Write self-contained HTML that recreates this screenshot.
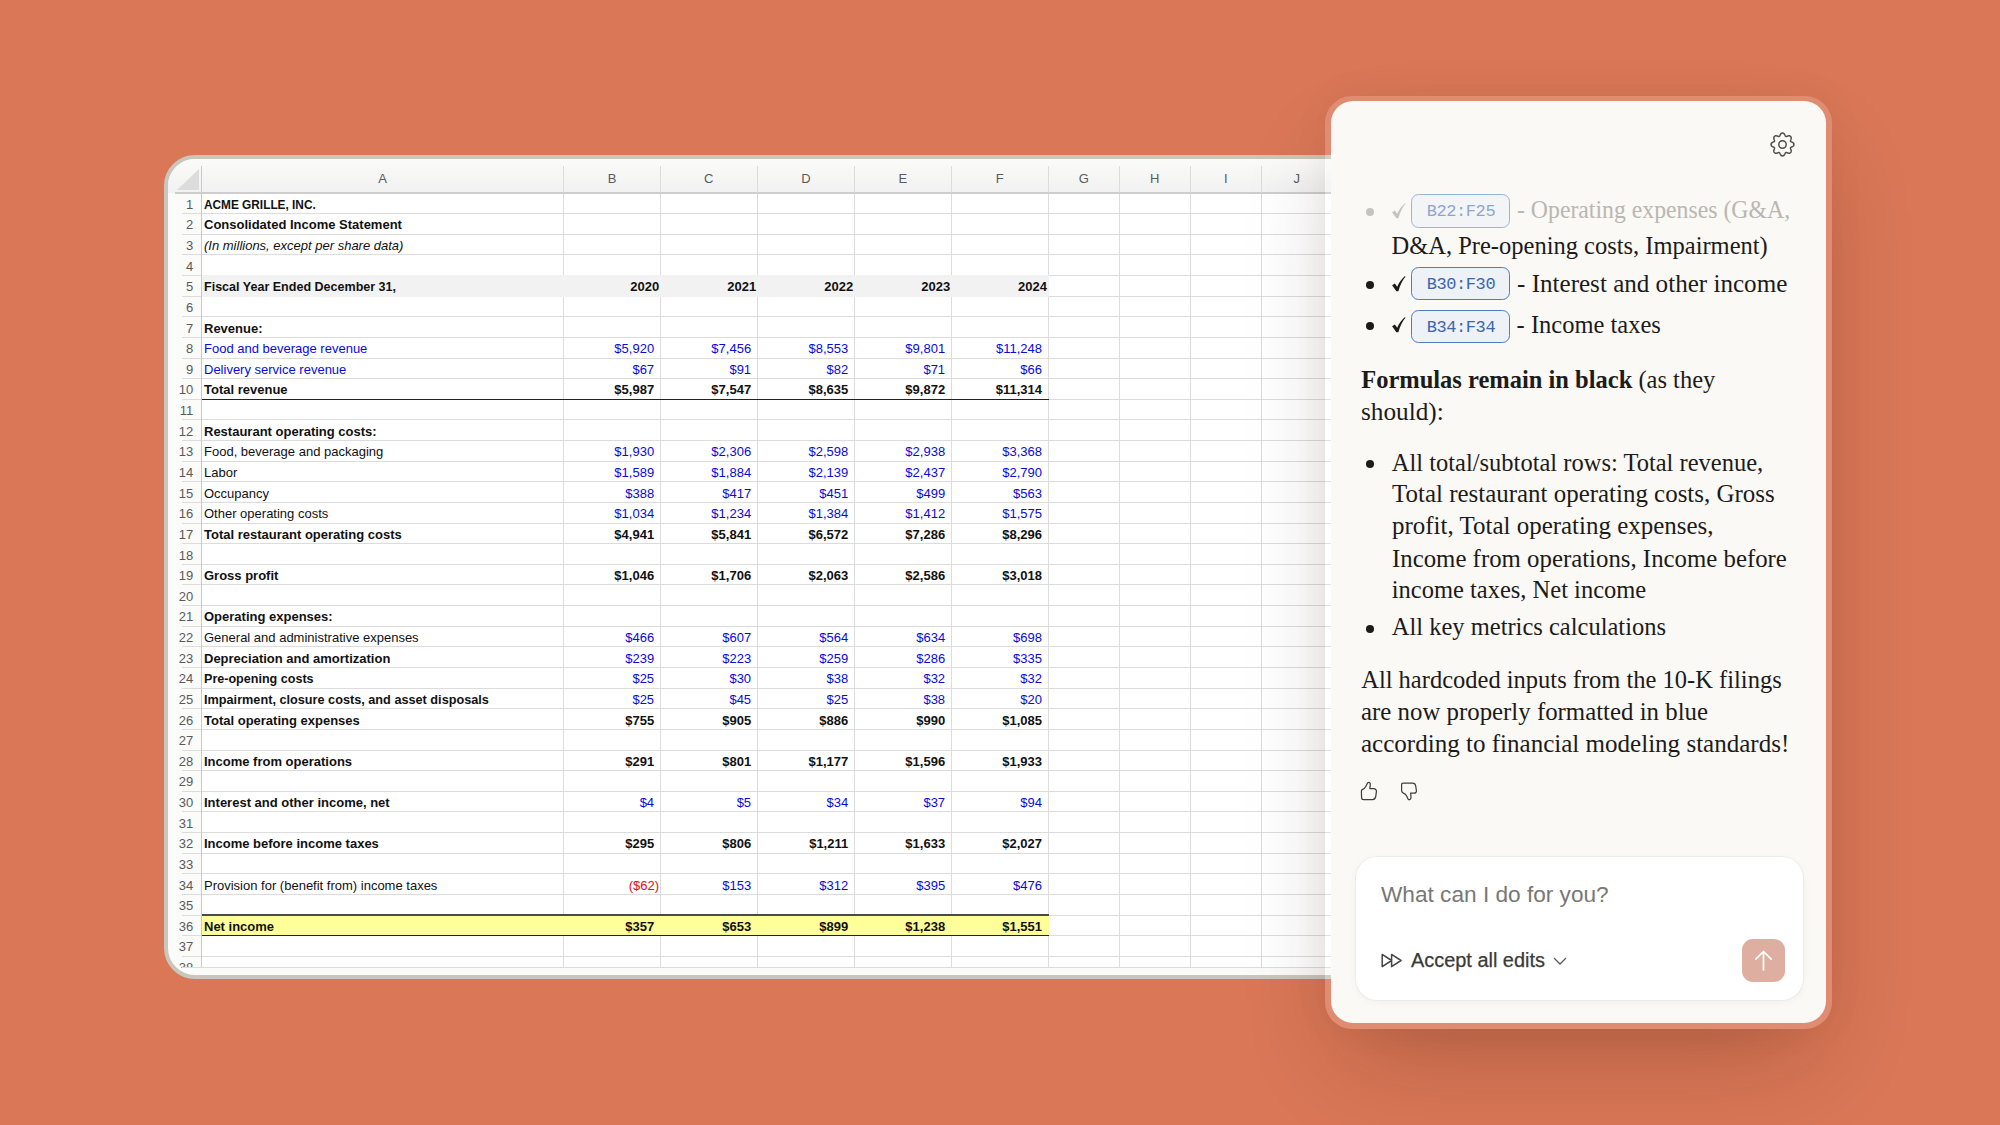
<!DOCTYPE html>
<html><head><meta charset="utf-8">
<style>
*{box-sizing:border-box;margin:0;padding:0}
html,body{width:2000px;height:1125px;overflow:hidden}
body{background:#d97757;position:relative;font-family:"Liberation Sans",sans-serif}
#sheet{position:absolute;left:164px;top:155px;width:1300px;height:824px;border:4px solid #c9c6be;border-radius:31px;background:#fbfbfa;overflow:hidden}
#grid{position:absolute;left:0;top:0;width:1292px;height:808.50px;overflow:hidden}
.colhdr{position:absolute;left:0;top:0;width:1300px;height:34px;background:linear-gradient(#fbfbfa,#f1f1f1)}
.gridbg{position:absolute;left:33.50px;top:34.00px;width:1200px;height:775.00px;background:#fff}
.hl{position:absolute;left:14px;width:1300px;height:1px;background:#dcdcdc}
.vl{position:absolute;top:7px;height:802px;width:1px;background:#dcdcdc}
.fill{position:absolute}
.dl{position:absolute;height:1.5px;background:#222}
.rn{position:absolute;left:0;width:25.19999999999999px;height:20.63px;line-height:20.63px;text-align:right;font-size:13px;color:#5a5a5a}
.cl{position:absolute;top:12.199999999999989px;height:16px;line-height:16px;text-align:center;font-size:13px;color:#5a5a5a}
.ct{position:absolute;height:20.63px;line-height:20.63px;font-size:13px;color:#111;white-space:nowrap}
.ct.b{font-weight:bold}
.ct.it{font-style:italic}
.ct.bl{color:#0a0ad8}
.ct.rd{color:#e01010}
.hdrsep{position:absolute;left:33.00px;top:7px;width:1.2px;height:802px;background:#c9c9c9}
.hdrbot{position:absolute;left:7px;top:33.00px;width:1300px;height:2px;background:#cdcdcd}
.tri{position:absolute;left:9px;top:10px;width:0;height:0;border-left:22px solid transparent;border-bottom:21px solid #dcdcdc}
.shade{position:absolute;left:1122px;top:0;width:50px;height:816px;background:linear-gradient(90deg,rgba(0,0,0,0),rgba(0,0,0,0.07))}
#panelring{position:absolute;left:1325px;top:96px;width:507px;height:933px;border-radius:27px;background:rgba(255,255,255,0.16);box-shadow:0 45px 100px -25px rgba(60,20,0,0.27),0 0 40px rgba(0,0,0,0.045)}
#panel{position:absolute;left:1331px;top:101px;width:495px;height:922px;border-radius:22px;background:#faf9f5;overflow:hidden;font-family:"Liberation Serif",serif;color:#1d1c1a}
.pl{position:absolute;white-space:nowrap}
.abs{position:absolute;overflow:visible}
.dot{position:absolute;border-radius:50%}
.chip{position:absolute;border:1.8px solid #4f7bbf;border-radius:7.5px;background:#eef1f5}
#inbox{position:absolute;background:#fff;border-radius:21px;box-shadow:0 0 0 1px rgba(0,0,0,0.035),0 2px 8px rgba(0,0,0,0.045)}
#send{position:absolute;background:#deafa0;border-radius:11px}
</style></head><body>
<div id="sheet">
 <div id="grid">
 <div class="colhdr"></div>
 <div class="gridbg"></div>
 <div class="hl" style="top:54.13px"></div>
<div class="hl" style="top:74.76px"></div>
<div class="hl" style="top:95.39px"></div>
<div class="hl" style="top:116.02px"></div>
<div class="hl" style="top:136.65px"></div>
<div class="hl" style="top:157.28px"></div>
<div class="hl" style="top:177.91px"></div>
<div class="hl" style="top:198.54px"></div>
<div class="hl" style="top:219.17px"></div>
<div class="hl" style="top:239.80px"></div>
<div class="hl" style="top:260.43px"></div>
<div class="hl" style="top:281.06px"></div>
<div class="hl" style="top:301.69px"></div>
<div class="hl" style="top:322.32px"></div>
<div class="hl" style="top:342.95px"></div>
<div class="hl" style="top:363.58px"></div>
<div class="hl" style="top:384.21px"></div>
<div class="hl" style="top:404.84px"></div>
<div class="hl" style="top:425.47px"></div>
<div class="hl" style="top:446.10px"></div>
<div class="hl" style="top:466.73px"></div>
<div class="hl" style="top:487.36px"></div>
<div class="hl" style="top:507.99px"></div>
<div class="hl" style="top:528.62px"></div>
<div class="hl" style="top:549.25px"></div>
<div class="hl" style="top:569.88px"></div>
<div class="hl" style="top:590.51px"></div>
<div class="hl" style="top:611.14px"></div>
<div class="hl" style="top:631.77px"></div>
<div class="hl" style="top:652.40px"></div>
<div class="hl" style="top:673.03px"></div>
<div class="hl" style="top:693.66px"></div>
<div class="hl" style="top:714.29px"></div>
<div class="hl" style="top:734.92px"></div>
<div class="hl" style="top:755.55px"></div>
<div class="hl" style="top:776.18px"></div>
<div class="hl" style="top:796.81px"></div>
<div class="vl" style="left:395.20px"></div>
<div class="vl" style="left:491.80px"></div>
<div class="vl" style="left:588.80px"></div>
<div class="vl" style="left:685.90px"></div>
<div class="vl" style="left:782.80px"></div>
<div class="vl" style="left:879.70px"></div>
<div class="vl" style="left:950.80px"></div>
<div class="vl" style="left:1021.80px"></div>
<div class="vl" style="left:1092.80px"></div>
<div class="vl" style="left:1163.80px"></div>
<div class="vl" style="left:1234.80px"></div>
<div class="fill" style="left:33.40px;top:115.92px;width:847.30px;height:21.83px;background:#f2f2f2"></div>
<div class="fill" style="left:33.40px;top:755.45px;width:847.30px;height:21.83px;background:#ffff99"></div>
<div class="dl" style="left:34.00px;top:239.55px;width:846.70px;background:#222"></div>
<div class="dl" style="left:34.00px;top:755.30px;width:846.70px;background:#4a4a4a"></div>
<div class="dl" style="left:34.00px;top:775.93px;width:846.70px;background:#222"></div>
<div class="rn" style="top:35.80px">1</div>
<div class="rn" style="top:56.43px">2</div>
<div class="rn" style="top:77.06px">3</div>
<div class="rn" style="top:97.69px">4</div>
<div class="rn" style="top:118.32px">5</div>
<div class="rn" style="top:138.95px">6</div>
<div class="rn" style="top:159.58px">7</div>
<div class="rn" style="top:180.21px">8</div>
<div class="rn" style="top:200.84px">9</div>
<div class="rn" style="top:221.47px">10</div>
<div class="rn" style="top:242.10px">11</div>
<div class="rn" style="top:262.73px">12</div>
<div class="rn" style="top:283.36px">13</div>
<div class="rn" style="top:303.99px">14</div>
<div class="rn" style="top:324.62px">15</div>
<div class="rn" style="top:345.25px">16</div>
<div class="rn" style="top:365.88px">17</div>
<div class="rn" style="top:386.51px">18</div>
<div class="rn" style="top:407.14px">19</div>
<div class="rn" style="top:427.77px">20</div>
<div class="rn" style="top:448.40px">21</div>
<div class="rn" style="top:469.03px">22</div>
<div class="rn" style="top:489.66px">23</div>
<div class="rn" style="top:510.29px">24</div>
<div class="rn" style="top:530.92px">25</div>
<div class="rn" style="top:551.55px">26</div>
<div class="rn" style="top:572.18px">27</div>
<div class="rn" style="top:592.81px">28</div>
<div class="rn" style="top:613.44px">29</div>
<div class="rn" style="top:634.07px">30</div>
<div class="rn" style="top:654.70px">31</div>
<div class="rn" style="top:675.33px">32</div>
<div class="rn" style="top:695.96px">33</div>
<div class="rn" style="top:716.59px">34</div>
<div class="rn" style="top:737.22px">35</div>
<div class="rn" style="top:757.85px">36</div>
<div class="rn" style="top:778.48px">37</div>
<div class="rn" style="top:799.11px">38</div>
<div class="cl" style="left:33.50px;width:362.20px">A</div>
<div class="cl" style="left:395.70px;width:96.60px">B</div>
<div class="cl" style="left:492.30px;width:97.00px">C</div>
<div class="cl" style="left:589.30px;width:97.10px">D</div>
<div class="cl" style="left:686.40px;width:96.90px">E</div>
<div class="cl" style="left:783.30px;width:96.90px">F</div>
<div class="cl" style="left:880.20px;width:71.10px">G</div>
<div class="cl" style="left:951.30px;width:71.00px">H</div>
<div class="cl" style="left:1022.30px;width:71.00px">I</div>
<div class="cl" style="left:1093.30px;width:71.00px">J</div>
<div class="ct b" style="top:35.80px;left:36.00px;transform:scaleX(0.91);transform-origin:0 0">ACME GRILLE, INC.</div>
<div class="ct b" style="top:56.43px;left:36.00px">Consolidated Income Statement</div>
<div class="ct it" style="top:77.06px;left:36.00px">(In millions, except per share data)</div>
<div class="ct b" style="top:118.32px;left:36.00px;transform:scaleX(0.964);transform-origin:0 0">Fiscal Year Ended December 31,</div>
<div class="ct num b" style="top:118.32px;right:800.90px">2020</div>
<div class="ct num b" style="top:118.32px;right:703.90px">2021</div>
<div class="ct num b" style="top:118.32px;right:606.80px">2022</div>
<div class="ct num b" style="top:118.32px;right:509.90px">2023</div>
<div class="ct num b" style="top:118.32px;right:413.00px">2024</div>
<div class="ct b" style="top:159.58px;left:36.00px">Revenue:</div>
<div class="ct bl" style="top:180.21px;left:36.00px">Food and beverage revenue</div>
<div class="ct num bl" style="top:180.21px;right:805.90px">$5,920</div>
<div class="ct num bl" style="top:180.21px;right:708.90px">$7,456</div>
<div class="ct num bl" style="top:180.21px;right:611.80px">$8,553</div>
<div class="ct num bl" style="top:180.21px;right:514.90px">$9,801</div>
<div class="ct num bl" style="top:180.21px;right:418.00px">$11,248</div>
<div class="ct bl" style="top:200.84px;left:36.00px">Delivery service revenue</div>
<div class="ct num bl" style="top:200.84px;right:805.90px">$67</div>
<div class="ct num bl" style="top:200.84px;right:708.90px">$91</div>
<div class="ct num bl" style="top:200.84px;right:611.80px">$82</div>
<div class="ct num bl" style="top:200.84px;right:514.90px">$71</div>
<div class="ct num bl" style="top:200.84px;right:418.00px">$66</div>
<div class="ct b" style="top:221.47px;left:36.00px">Total revenue</div>
<div class="ct num b" style="top:221.47px;right:805.90px">$5,987</div>
<div class="ct num b" style="top:221.47px;right:708.90px">$7,547</div>
<div class="ct num b" style="top:221.47px;right:611.80px">$8,635</div>
<div class="ct num b" style="top:221.47px;right:514.90px">$9,872</div>
<div class="ct num b" style="top:221.47px;right:418.00px">$11,314</div>
<div class="ct b" style="top:262.73px;left:36.00px">Restaurant operating costs:</div>
<div class="ct " style="top:283.36px;left:36.00px">Food, beverage and packaging</div>
<div class="ct num bl" style="top:283.36px;right:805.90px">$1,930</div>
<div class="ct num bl" style="top:283.36px;right:708.90px">$2,306</div>
<div class="ct num bl" style="top:283.36px;right:611.80px">$2,598</div>
<div class="ct num bl" style="top:283.36px;right:514.90px">$2,938</div>
<div class="ct num bl" style="top:283.36px;right:418.00px">$3,368</div>
<div class="ct " style="top:303.99px;left:36.00px">Labor</div>
<div class="ct num bl" style="top:303.99px;right:805.90px">$1,589</div>
<div class="ct num bl" style="top:303.99px;right:708.90px">$1,884</div>
<div class="ct num bl" style="top:303.99px;right:611.80px">$2,139</div>
<div class="ct num bl" style="top:303.99px;right:514.90px">$2,437</div>
<div class="ct num bl" style="top:303.99px;right:418.00px">$2,790</div>
<div class="ct " style="top:324.62px;left:36.00px">Occupancy</div>
<div class="ct num bl" style="top:324.62px;right:805.90px">$388</div>
<div class="ct num bl" style="top:324.62px;right:708.90px">$417</div>
<div class="ct num bl" style="top:324.62px;right:611.80px">$451</div>
<div class="ct num bl" style="top:324.62px;right:514.90px">$499</div>
<div class="ct num bl" style="top:324.62px;right:418.00px">$563</div>
<div class="ct " style="top:345.25px;left:36.00px">Other operating costs</div>
<div class="ct num bl" style="top:345.25px;right:805.90px">$1,034</div>
<div class="ct num bl" style="top:345.25px;right:708.90px">$1,234</div>
<div class="ct num bl" style="top:345.25px;right:611.80px">$1,384</div>
<div class="ct num bl" style="top:345.25px;right:514.90px">$1,412</div>
<div class="ct num bl" style="top:345.25px;right:418.00px">$1,575</div>
<div class="ct b" style="top:365.88px;left:36.00px">Total restaurant operating costs</div>
<div class="ct num b" style="top:365.88px;right:805.90px">$4,941</div>
<div class="ct num b" style="top:365.88px;right:708.90px">$5,841</div>
<div class="ct num b" style="top:365.88px;right:611.80px">$6,572</div>
<div class="ct num b" style="top:365.88px;right:514.90px">$7,286</div>
<div class="ct num b" style="top:365.88px;right:418.00px">$8,296</div>
<div class="ct b" style="top:407.14px;left:36.00px">Gross profit</div>
<div class="ct num b" style="top:407.14px;right:805.90px">$1,046</div>
<div class="ct num b" style="top:407.14px;right:708.90px">$1,706</div>
<div class="ct num b" style="top:407.14px;right:611.80px">$2,063</div>
<div class="ct num b" style="top:407.14px;right:514.90px">$2,586</div>
<div class="ct num b" style="top:407.14px;right:418.00px">$3,018</div>
<div class="ct b" style="top:448.40px;left:36.00px">Operating expenses:</div>
<div class="ct " style="top:469.03px;left:36.00px">General and administrative expenses</div>
<div class="ct num bl" style="top:469.03px;right:805.90px">$466</div>
<div class="ct num bl" style="top:469.03px;right:708.90px">$607</div>
<div class="ct num bl" style="top:469.03px;right:611.80px">$564</div>
<div class="ct num bl" style="top:469.03px;right:514.90px">$634</div>
<div class="ct num bl" style="top:469.03px;right:418.00px">$698</div>
<div class="ct b" style="top:489.66px;left:36.00px">Depreciation and amortization</div>
<div class="ct num bl" style="top:489.66px;right:805.90px">$239</div>
<div class="ct num bl" style="top:489.66px;right:708.90px">$223</div>
<div class="ct num bl" style="top:489.66px;right:611.80px">$259</div>
<div class="ct num bl" style="top:489.66px;right:514.90px">$286</div>
<div class="ct num bl" style="top:489.66px;right:418.00px">$335</div>
<div class="ct b" style="top:510.29px;left:36.00px;transform:scaleX(0.966);transform-origin:0 0">Pre-opening costs</div>
<div class="ct num bl" style="top:510.29px;right:805.90px">$25</div>
<div class="ct num bl" style="top:510.29px;right:708.90px">$30</div>
<div class="ct num bl" style="top:510.29px;right:611.80px">$38</div>
<div class="ct num bl" style="top:510.29px;right:514.90px">$32</div>
<div class="ct num bl" style="top:510.29px;right:418.00px">$32</div>
<div class="ct b" style="top:530.92px;left:36.00px;transform:scaleX(0.976);transform-origin:0 0">Impairment, closure costs, and asset disposals</div>
<div class="ct num bl" style="top:530.92px;right:805.90px">$25</div>
<div class="ct num bl" style="top:530.92px;right:708.90px">$45</div>
<div class="ct num bl" style="top:530.92px;right:611.80px">$25</div>
<div class="ct num bl" style="top:530.92px;right:514.90px">$38</div>
<div class="ct num bl" style="top:530.92px;right:418.00px">$20</div>
<div class="ct b" style="top:551.55px;left:36.00px">Total operating expenses</div>
<div class="ct num b" style="top:551.55px;right:805.90px">$755</div>
<div class="ct num b" style="top:551.55px;right:708.90px">$905</div>
<div class="ct num b" style="top:551.55px;right:611.80px">$886</div>
<div class="ct num b" style="top:551.55px;right:514.90px">$990</div>
<div class="ct num b" style="top:551.55px;right:418.00px">$1,085</div>
<div class="ct b" style="top:592.81px;left:36.00px">Income from operations</div>
<div class="ct num b" style="top:592.81px;right:805.90px">$291</div>
<div class="ct num b" style="top:592.81px;right:708.90px">$801</div>
<div class="ct num b" style="top:592.81px;right:611.80px">$1,177</div>
<div class="ct num b" style="top:592.81px;right:514.90px">$1,596</div>
<div class="ct num b" style="top:592.81px;right:418.00px">$1,933</div>
<div class="ct b" style="top:634.07px;left:36.00px">Interest and other income, net</div>
<div class="ct num bl" style="top:634.07px;right:805.90px">$4</div>
<div class="ct num bl" style="top:634.07px;right:708.90px">$5</div>
<div class="ct num bl" style="top:634.07px;right:611.80px">$34</div>
<div class="ct num bl" style="top:634.07px;right:514.90px">$37</div>
<div class="ct num bl" style="top:634.07px;right:418.00px">$94</div>
<div class="ct b" style="top:675.33px;left:36.00px">Income before income taxes</div>
<div class="ct num b" style="top:675.33px;right:805.90px">$295</div>
<div class="ct num b" style="top:675.33px;right:708.90px">$806</div>
<div class="ct num b" style="top:675.33px;right:611.80px">$1,211</div>
<div class="ct num b" style="top:675.33px;right:514.90px">$1,633</div>
<div class="ct num b" style="top:675.33px;right:418.00px">$2,027</div>
<div class="ct " style="top:716.59px;left:36.00px">Provision for (benefit from) income taxes</div>
<div class="ct num rd" style="top:716.59px;right:801.00px">($62)</div>
<div class="ct num bl" style="top:716.59px;right:708.90px">$153</div>
<div class="ct num bl" style="top:716.59px;right:611.80px">$312</div>
<div class="ct num bl" style="top:716.59px;right:514.90px">$395</div>
<div class="ct num bl" style="top:716.59px;right:418.00px">$476</div>
<div class="ct b" style="top:757.85px;left:36.00px">Net income</div>
<div class="ct num b" style="top:757.85px;right:805.90px">$357</div>
<div class="ct num b" style="top:757.85px;right:708.90px">$653</div>
<div class="ct num b" style="top:757.85px;right:611.80px">$899</div>
<div class="ct num b" style="top:757.85px;right:514.90px">$1,238</div>
<div class="ct num b" style="top:757.85px;right:418.00px">$1,551</div>
 <div class="hdrsep"></div>
 <div class="hdrbot"></div>
 <div class="tri"></div>
 </div>
 <div class="hl" style="top:808.20px"></div>

</div>
<div id="panelring"></div>
<div id="panel">
<svg class="abs" style="left:438px;top:30px" width="27" height="27" viewBox="0 0 27 27">
<g transform="translate(13.5,13.5)" fill="none" stroke="#4f4f4d" stroke-width="1.5" stroke-linejoin="round">
<path d="M0.00 -11.40 L0.30 -11.39 L0.59 -11.35 L0.89 -11.25 L1.17 -11.10 L1.43 -10.89 L1.68 -10.62 L1.91 -10.31 L2.12 -9.97 L2.31 -9.60 L2.48 -9.24 L2.64 -8.90 L2.79 -8.60 L2.96 -8.35 L3.13 -8.16 L3.33 -8.04 L3.55 -7.98 L3.81 -7.99 L4.11 -8.06 L4.43 -8.16 L4.78 -8.29 L5.16 -8.42 L5.55 -8.54 L5.94 -8.64 L6.32 -8.70 L6.69 -8.71 L7.02 -8.67 L7.33 -8.58 L7.60 -8.44 L7.84 -8.26 L8.06 -8.06 L8.26 -7.84 L8.44 -7.60 L8.58 -7.33 L8.67 -7.02 L8.71 -6.69 L8.70 -6.32 L8.64 -5.94 L8.54 -5.55 L8.42 -5.16 L8.29 -4.78 L8.16 -4.43 L8.06 -4.11 L7.99 -3.81 L7.98 -3.55 L8.04 -3.33 L8.16 -3.13 L8.35 -2.96 L8.60 -2.79 L8.90 -2.64 L9.24 -2.48 L9.60 -2.31 L9.97 -2.12 L10.31 -1.91 L10.62 -1.68 L10.89 -1.43 L11.10 -1.17 L11.25 -0.89 L11.35 -0.59 L11.39 -0.30 L11.40 -0.00 L11.39 0.30 L11.35 0.59 L11.25 0.89 L11.10 1.17 L10.89 1.43 L10.62 1.68 L10.31 1.91 L9.97 2.12 L9.60 2.31 L9.24 2.48 L8.90 2.64 L8.60 2.79 L8.35 2.96 L8.16 3.13 L8.04 3.33 L7.98 3.55 L7.99 3.81 L8.06 4.11 L8.16 4.43 L8.29 4.78 L8.42 5.16 L8.54 5.55 L8.64 5.94 L8.70 6.32 L8.71 6.69 L8.67 7.02 L8.58 7.33 L8.44 7.60 L8.26 7.84 L8.06 8.06 L7.84 8.26 L7.60 8.44 L7.33 8.58 L7.02 8.67 L6.69 8.71 L6.32 8.70 L5.94 8.64 L5.55 8.54 L5.16 8.42 L4.78 8.29 L4.43 8.16 L4.11 8.06 L3.81 7.99 L3.55 7.98 L3.33 8.04 L3.13 8.16 L2.96 8.35 L2.79 8.60 L2.64 8.90 L2.48 9.24 L2.31 9.60 L2.12 9.97 L1.91 10.31 L1.68 10.62 L1.43 10.89 L1.17 11.10 L0.89 11.25 L0.59 11.35 L0.30 11.39 L0.00 11.40 L-0.30 11.39 L-0.59 11.35 L-0.89 11.25 L-1.17 11.10 L-1.43 10.89 L-1.68 10.62 L-1.91 10.31 L-2.12 9.97 L-2.31 9.60 L-2.48 9.24 L-2.64 8.90 L-2.79 8.60 L-2.96 8.35 L-3.13 8.16 L-3.33 8.04 L-3.55 7.98 L-3.81 7.99 L-4.11 8.06 L-4.43 8.16 L-4.78 8.29 L-5.16 8.42 L-5.55 8.54 L-5.94 8.64 L-6.32 8.70 L-6.69 8.71 L-7.02 8.67 L-7.33 8.58 L-7.60 8.44 L-7.84 8.26 L-8.06 8.06 L-8.26 7.84 L-8.44 7.60 L-8.58 7.33 L-8.67 7.02 L-8.71 6.69 L-8.70 6.32 L-8.64 5.94 L-8.54 5.55 L-8.42 5.16 L-8.29 4.78 L-8.16 4.43 L-8.06 4.11 L-7.99 3.81 L-7.98 3.55 L-8.04 3.33 L-8.16 3.13 L-8.35 2.96 L-8.60 2.79 L-8.90 2.64 L-9.24 2.48 L-9.60 2.31 L-9.97 2.12 L-10.31 1.91 L-10.62 1.68 L-10.89 1.43 L-11.10 1.17 L-11.25 0.89 L-11.35 0.59 L-11.39 0.30 L-11.40 0.00 L-11.39 -0.30 L-11.35 -0.59 L-11.25 -0.89 L-11.10 -1.17 L-10.89 -1.43 L-10.62 -1.68 L-10.31 -1.91 L-9.97 -2.12 L-9.60 -2.31 L-9.24 -2.48 L-8.90 -2.64 L-8.60 -2.79 L-8.35 -2.96 L-8.16 -3.13 L-8.04 -3.33 L-7.98 -3.55 L-7.99 -3.81 L-8.06 -4.11 L-8.16 -4.43 L-8.29 -4.78 L-8.42 -5.16 L-8.54 -5.55 L-8.64 -5.94 L-8.70 -6.32 L-8.71 -6.69 L-8.67 -7.02 L-8.58 -7.33 L-8.44 -7.60 L-8.26 -7.84 L-8.06 -8.06 L-7.84 -8.26 L-7.60 -8.44 L-7.33 -8.58 L-7.02 -8.67 L-6.69 -8.71 L-6.32 -8.70 L-5.94 -8.64 L-5.55 -8.54 L-5.16 -8.42 L-4.78 -8.29 L-4.43 -8.16 L-4.11 -8.06 L-3.81 -7.99 L-3.55 -7.98 L-3.33 -8.04 L-3.13 -8.16 L-2.96 -8.35 L-2.79 -8.60 L-2.64 -8.90 L-2.48 -9.24 L-2.31 -9.60 L-2.12 -9.97 L-1.91 -10.31 L-1.68 -10.62 L-1.43 -10.89 L-1.17 -11.10 L-0.89 -11.25 L-0.59 -11.35 L-0.30 -11.39 L-0.00 -11.40 Z"/>
<circle r="3.7"/>
</g></svg>
<div style="opacity:0.32">
<div class="dot" style="left:35.00px;top:106.50px;width:8px;height:8px;background:#555"></div>
<svg class="abs" style="left:61.00px;top:101.50px" width="13.50" height="15.50" viewBox="0 0 14 16"><path d="M0.1 9.6 L2.9 7.8 L5.4 11.2 C7.4 6.8 10.2 2.9 13.5 0.1 L14 0.7 C10.9 4.2 8.4 9.2 6.6 15.8 L4.5 15.8 Z" fill="#555"/></svg>
</div>
<div class="chip" style="left:80.20px;top:92.90px;width:99.20px;height:33.70px;opacity:0.55"></div><div class="pl" style="left:95.70px;top:95.47px;font-family:'Liberation Mono',monospace;font-size:17px;line-height:32px;color:#3a66ad;opacity:0.55;letter-spacing:-0.42px">B22:F25</div>
<div class="pl" style="left:185.60px;top:93.03px;font-family:'Liberation Serif',serif;font-size:24.5px;line-height:32px;color:#b9b7b2;;transform:scaleX(0.9695);transform-origin:0 0">- Operating expenses (G&amp;A,</div>
<div class="pl" style="left:60.50px;top:128.83px;font-family:'Liberation Serif',serif;font-size:24.5px;line-height:32px;color:#1c1b19;">D&amp;A, Pre-opening costs, Impairment)</div>
<div class="dot" style="left:35.00px;top:179.70px;width:8px;height:8px;background:#1c1b19"></div>
<svg class="abs" style="left:61.00px;top:174.80px" width="13.50" height="15.40" viewBox="0 0 14 16"><path d="M0.1 9.6 L2.9 7.8 L5.4 11.2 C7.4 6.8 10.2 2.9 13.5 0.1 L14 0.7 C10.9 4.2 8.4 9.2 6.6 15.8 L4.5 15.8 Z" fill="#1c1b19"/></svg>
<div class="chip" style="left:80.20px;top:165.90px;width:99.20px;height:33.60px;opacity:1.0"></div><div class="pl" style="left:95.70px;top:168.17px;font-family:'Liberation Mono',monospace;font-size:17px;line-height:32px;color:#3a66ad;opacity:1.0;letter-spacing:-0.42px">B30:F30</div>
<div class="pl" style="left:185.60px;top:167.33px;font-family:'Liberation Serif',serif;font-size:24.5px;line-height:32px;color:#1c1b19;;transform:scaleX(1.024);transform-origin:0 0">- Interest and other income</div>
<div class="dot" style="left:35.00px;top:220.70px;width:8px;height:8px;background:#1c1b19"></div>
<svg class="abs" style="left:61.00px;top:216.00px" width="13.50" height="15.40" viewBox="0 0 14 16"><path d="M0.1 9.6 L2.9 7.8 L5.4 11.2 C7.4 6.8 10.2 2.9 13.5 0.1 L14 0.7 C10.9 4.2 8.4 9.2 6.6 15.8 L4.5 15.8 Z" fill="#1c1b19"/></svg>
<div class="chip" style="left:80.20px;top:208.50px;width:99.20px;height:33.30px;opacity:1.0"></div><div class="pl" style="left:95.70px;top:210.77px;font-family:'Liberation Mono',monospace;font-size:17px;line-height:32px;color:#3a66ad;opacity:1.0;letter-spacing:-0.42px">B34:F34</div>
<div class="pl" style="left:185.60px;top:208.13px;font-family:'Liberation Serif',serif;font-size:24.5px;line-height:32px;color:#1c1b19;">- Income taxes</div>
<div class="pl" style="left:30.20px;top:262.93px;font-family:'Liberation Serif',serif;font-size:24.5px;line-height:32px;color:#1c1b19;"><b>Formulas remain in black</b> (as they</div>
<div class="pl" style="left:30.20px;top:295.23px;font-family:'Liberation Serif',serif;font-size:24.5px;line-height:32px;color:#1c1b19;;transform:scaleX(1.03);transform-origin:0 0">should):</div>
<div class="dot" style="left:35.40px;top:359.30px;width:8px;height:8px;background:#1c1b19"></div>
<div class="pl" style="left:60.80px;top:345.53px;font-family:'Liberation Serif',serif;font-size:24.5px;line-height:32px;color:#1c1b19;">All total/subtotal rows: Total revenue,</div>
<div class="pl" style="left:60.80px;top:377.33px;font-family:'Liberation Serif',serif;font-size:24.5px;line-height:32px;color:#1c1b19;;transform:scaleX(1.018);transform-origin:0 0">Total restaurant operating costs, Gross</div>
<div class="pl" style="left:60.80px;top:409.13px;font-family:'Liberation Serif',serif;font-size:24.5px;line-height:32px;color:#1c1b19;;transform:scaleX(1.019);transform-origin:0 0">profit, Total operating expenses,</div>
<div class="pl" style="left:60.80px;top:441.53px;font-family:'Liberation Serif',serif;font-size:24.5px;line-height:32px;color:#1c1b19;;transform:scaleX(1.013);transform-origin:0 0">Income from operations, Income before</div>
<div class="pl" style="left:60.80px;top:473.13px;font-family:'Liberation Serif',serif;font-size:24.5px;line-height:32px;color:#1c1b19;">income taxes, Net income</div>
<div class="dot" style="left:35.40px;top:524.20px;width:8px;height:8px;background:#1c1b19"></div>
<div class="pl" style="left:60.80px;top:510.43px;font-family:'Liberation Serif',serif;font-size:24.5px;line-height:32px;color:#1c1b19;">All key metrics calculations</div>
<div class="pl" style="left:30.20px;top:562.73px;font-family:'Liberation Serif',serif;font-size:24.5px;line-height:32px;color:#1c1b19;">All hardcoded inputs from the 10-K filings</div>
<div class="pl" style="left:30.20px;top:595.03px;font-family:'Liberation Serif',serif;font-size:24.5px;line-height:32px;color:#1c1b19;;transform:scaleX(1.014);transform-origin:0 0">are now properly formatted in blue</div>
<div class="pl" style="left:30.20px;top:626.53px;font-family:'Liberation Serif',serif;font-size:24.5px;line-height:32px;color:#1c1b19;;transform:scaleX(1.022);transform-origin:0 0">according to financial modeling standards!</div>
<svg class="abs" style="left:28px;top:679px" width="20" height="22" viewBox="0 0 20 22">
<path d="M3.2 9.6 C5.2 9.0 6.2 8.0 7.2 5.8 L8.4 3.2 C9.0 1.9 10.8 2.0 11.2 3.4 C11.5 4.6 11.0 6.2 10.8 8.6 L14.6 8.6 C16.4 8.6 17.6 9.9 17.4 11.6 L16.8 16.2 C16.5 18.2 15.4 19.6 13.6 19.6 L4.6 19.6 C3.5 19.6 2.6 18.8 2.6 17.7 L2.4 11.4 C2.4 10.6 2.7 9.8 3.2 9.6 Z" fill="none" stroke="#3f3f3d" stroke-width="1.25" stroke-linejoin="round"/></svg>
<svg class="abs" style="left:68px;top:680px" width="20" height="22" viewBox="0 0 20 22">
<path d="M2.6 3.6 C2.6 2.7 3.2 2.2 4.0 2.2 L13.4 2.2 C15.2 2.2 16.4 3.3 16.7 5.0 L17.4 9.6 C17.6 11.2 16.6 12.2 15.2 12.2 L11.6 12.2 C11.8 14.0 12.2 15.6 11.9 17.2 C11.6 18.8 9.6 19.4 8.9 17.8 L7.8 15.2 C7.0 13.4 6.0 12.6 4.0 11.8 C3.0 11.4 2.6 10.8 2.6 9.8 Z" fill="none" stroke="#3f3f3d" stroke-width="1.25" stroke-linejoin="round"/></svg>
<div id="inbox" style="left:24.60px;top:756px;width:447.20px;height:142.80px"></div>
<div class="pl" style="left:49.80px;top:778.47px;font-family:'Liberation Sans',sans-serif;font-size:22.3px;line-height:32px;color:#787775;;transform:scaleX(1.015);transform-origin:0 0">What can I do for you?</div>
<svg class="abs" style="left:49px;top:851px" width="25" height="17" viewBox="0 0 25 17">
<path d="M2.2 2.4 L11.6 8.5 L2.2 14.6 Z M11.6 2.4 L21.0 8.5 L11.6 14.6 Z" fill="none" stroke="#454543" stroke-width="1.5" stroke-linejoin="round"/></svg>
<div class="pl" style="left:80.40px;top:842.78px;font-family:'Liberation Sans',sans-serif;font-size:19.4px;line-height:32px;color:#3a3a38;-webkit-text-stroke:0.25px #3a3a38;transform:scaleX(1.027);transform-origin:0 0">Accept all edits</div>
<svg class="abs" style="left:221px;top:854px" width="16" height="12" viewBox="0 0 16 12">
<path d="M2 3 L8 9 L14 3" fill="none" stroke="#5a5a58" stroke-width="1.3"/></svg>
<div id="send" style="left:411.20px;top:838px;width:43px;height:43px"></div>
<svg class="abs" style="left:411.20px;top:838px" width="43" height="43" viewBox="0 0 43 43">
<path d="M21.5 31 L21.5 12.5 M13.8 20.2 L21.5 12.5 L29.2 20.2" fill="none" stroke="#fff" stroke-width="1.7" stroke-linecap="round" stroke-linejoin="round"/></svg>
</div>
</body></html>
